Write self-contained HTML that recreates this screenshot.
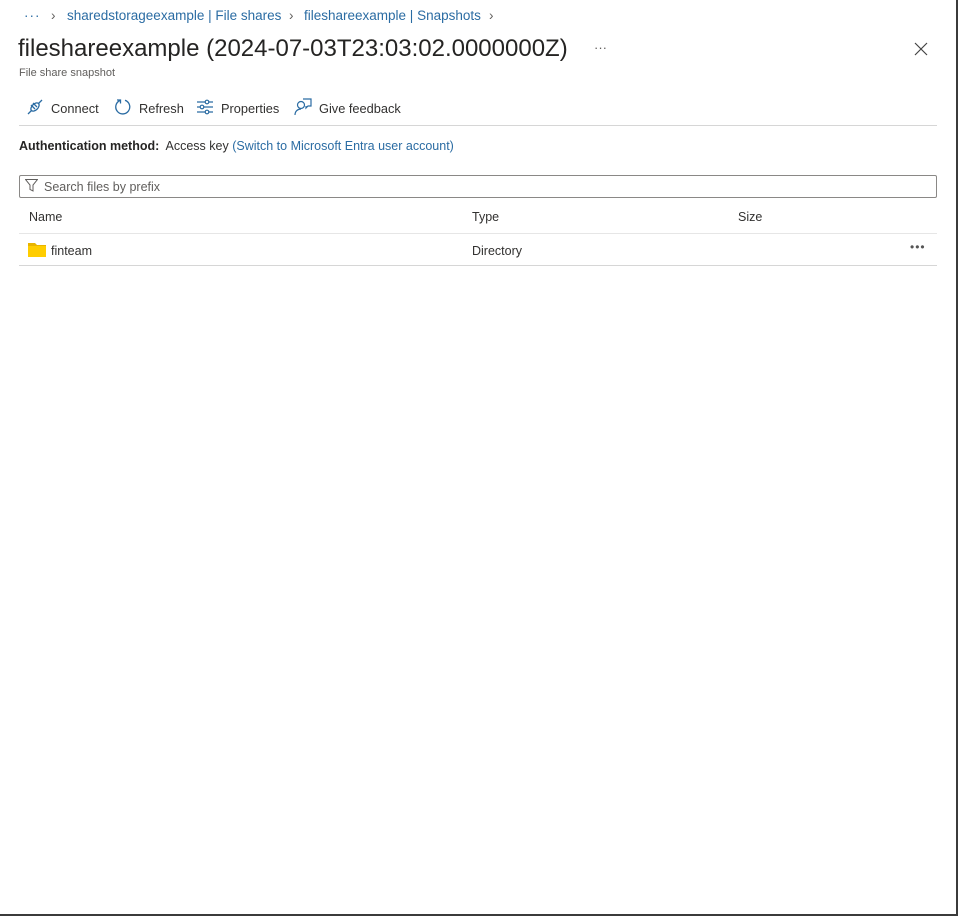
<!DOCTYPE html>
<html><head><style>
body{margin:0;width:958px;height:916px;background:#fff;font-family:"Liberation Sans",sans-serif;position:relative;overflow:hidden;color:#323130}
.a{position:absolute;white-space:nowrap}
.link{color:#2b6ca3}
.bc{top:8px;font-size:13.5px}
.tb{top:101px;font-size:12.8px;color:#323130}
</style></head><body>
<div style="position:absolute;right:0;top:0;width:2px;height:916px;background:#3b3b3b"></div>
<div style="position:absolute;left:0;bottom:0;width:958px;height:2px;background:#3b3b3b"></div>

<div class="a bc link" style="left:24px;letter-spacing:1px">···</div>
<div class="a bc" style="left:51px;color:#605e5c">›</div>
<div class="a bc link" style="left:67px">sharedstorageexample | File shares</div>
<div class="a bc" style="left:289px;color:#605e5c">›</div>
<div class="a bc link" style="left:304px">fileshareexample | Snapshots</div>
<div class="a bc" style="left:489px;color:#605e5c">›</div>

<div class="a" style="left:18px;top:35px;font-size:24px;color:#252423">fileshareexample (2024-07-03T23:03:02.0000000Z)</div>
<div class="a" style="left:594px;top:40px;font-size:13px;color:#605e5c">···</div>
<svg class="a" style="left:914px;top:42px" width="14" height="14" viewBox="0 0 14 14"><path d="M1 1L13 13M13 1L1 13" stroke="#444" stroke-width="1.2"/></svg>
<div class="a" style="left:19px;top:67px;font-size:11px;color:#605e5c">File share snapshot</div>

<svg class="a" style="left:26px;top:98px" width="18" height="18" viewBox="0 0 18 18" fill="none" stroke="#2b6ca3" stroke-width="1.3"><path d="M2 16L6 12M16 2L12 6"/><ellipse cx="9" cy="9" rx="5" ry="3" transform="rotate(-45 9 9)"/><path d="M7 5L11 9M5 7L9 11"/></svg>
<div class="a tb" style="left:51px">Connect</div>
<svg class="a" style="left:114px;top:98px" width="18" height="18" viewBox="0 0 18 18" fill="none" stroke="#2b6ca3" stroke-width="1.3"><path d="M6 2.5A7 7 0 1 0 11 2.3M3 2h3.5v3.5"/></svg>
<div class="a tb" style="left:139px">Refresh</div>
<svg class="a" style="left:196px;top:99px" width="18" height="16" viewBox="0 0 18 16" fill="none" stroke="#2b6ca3" stroke-width="1.2"><path d="M1 3h16M1 8h16M1 13h16"/><circle cx="11" cy="3" r="1.8" fill="#fff"/><circle cx="6" cy="8" r="1.8" fill="#fff"/><circle cx="11" cy="13" r="1.8" fill="#fff"/></svg>
<div class="a tb" style="left:221px">Properties</div>
<svg class="a" style="left:294px;top:98px" width="18" height="18" viewBox="0 0 18 18" fill="none" stroke="#2b6ca3" stroke-width="1.2"><circle cx="7" cy="7" r="3.5"/><path d="M1 17c0-4 3-6 6-6M9 1h8v7h-3l-2 2V8"/></svg>
<div class="a tb" style="left:319px">Give feedback</div>
<div class="a" style="left:19px;top:125px;width:918px;height:1px;background:#d6d6d6"></div>

<div class="a" style="left:19px;top:139px;font-size:12.5px"><b style="color:#252423">Authentication method:</b>&nbsp; Access key <span class="link">(Switch to Microsoft Entra user account)</span></div>

<div class="a" style="left:19px;top:175px;width:916px;height:21px;border:1px solid #8a8886;border-radius:2px"></div>
<svg class="a" style="left:25px;top:179px" width="13" height="13" viewBox="0 0 13 13" fill="none" stroke="#605e5c" stroke-width="1"><path d="M0.5 0.5h12L8 6v6L5 10.5V6z"/></svg>
<div class="a" style="left:44px;top:180px;font-size:12.5px;color:#605e5c">Search files by prefix</div>

<div class="a" style="left:29px;top:210px;font-size:12.5px">Name</div>
<div class="a" style="left:472px;top:210px;font-size:12.5px">Type</div>
<div class="a" style="left:738px;top:210px;font-size:12.5px">Size</div>
<div class="a" style="left:19px;top:233px;width:918px;height:1px;background:#e6e6e6"></div>
<svg class="a" style="left:28px;top:243px" width="18" height="14" viewBox="0 0 18 14"><path d="M0 0h7l2 2h9v12H0z" fill="#e8b400"/><rect x="0" y="3" width="18" height="11" fill="#ffcd00"/></svg>
<div class="a" style="left:51px;top:244px;font-size:12.5px">finteam</div>
<div class="a" style="left:472px;top:244px;font-size:12.5px">Directory</div>
<div class="a" style="left:910px;top:240px;font-size:12px;color:#555;letter-spacing:1px">•••</div>
<div class="a" style="left:19px;top:265px;width:918px;height:1px;background:#d6d6d6"></div>
</body></html>
